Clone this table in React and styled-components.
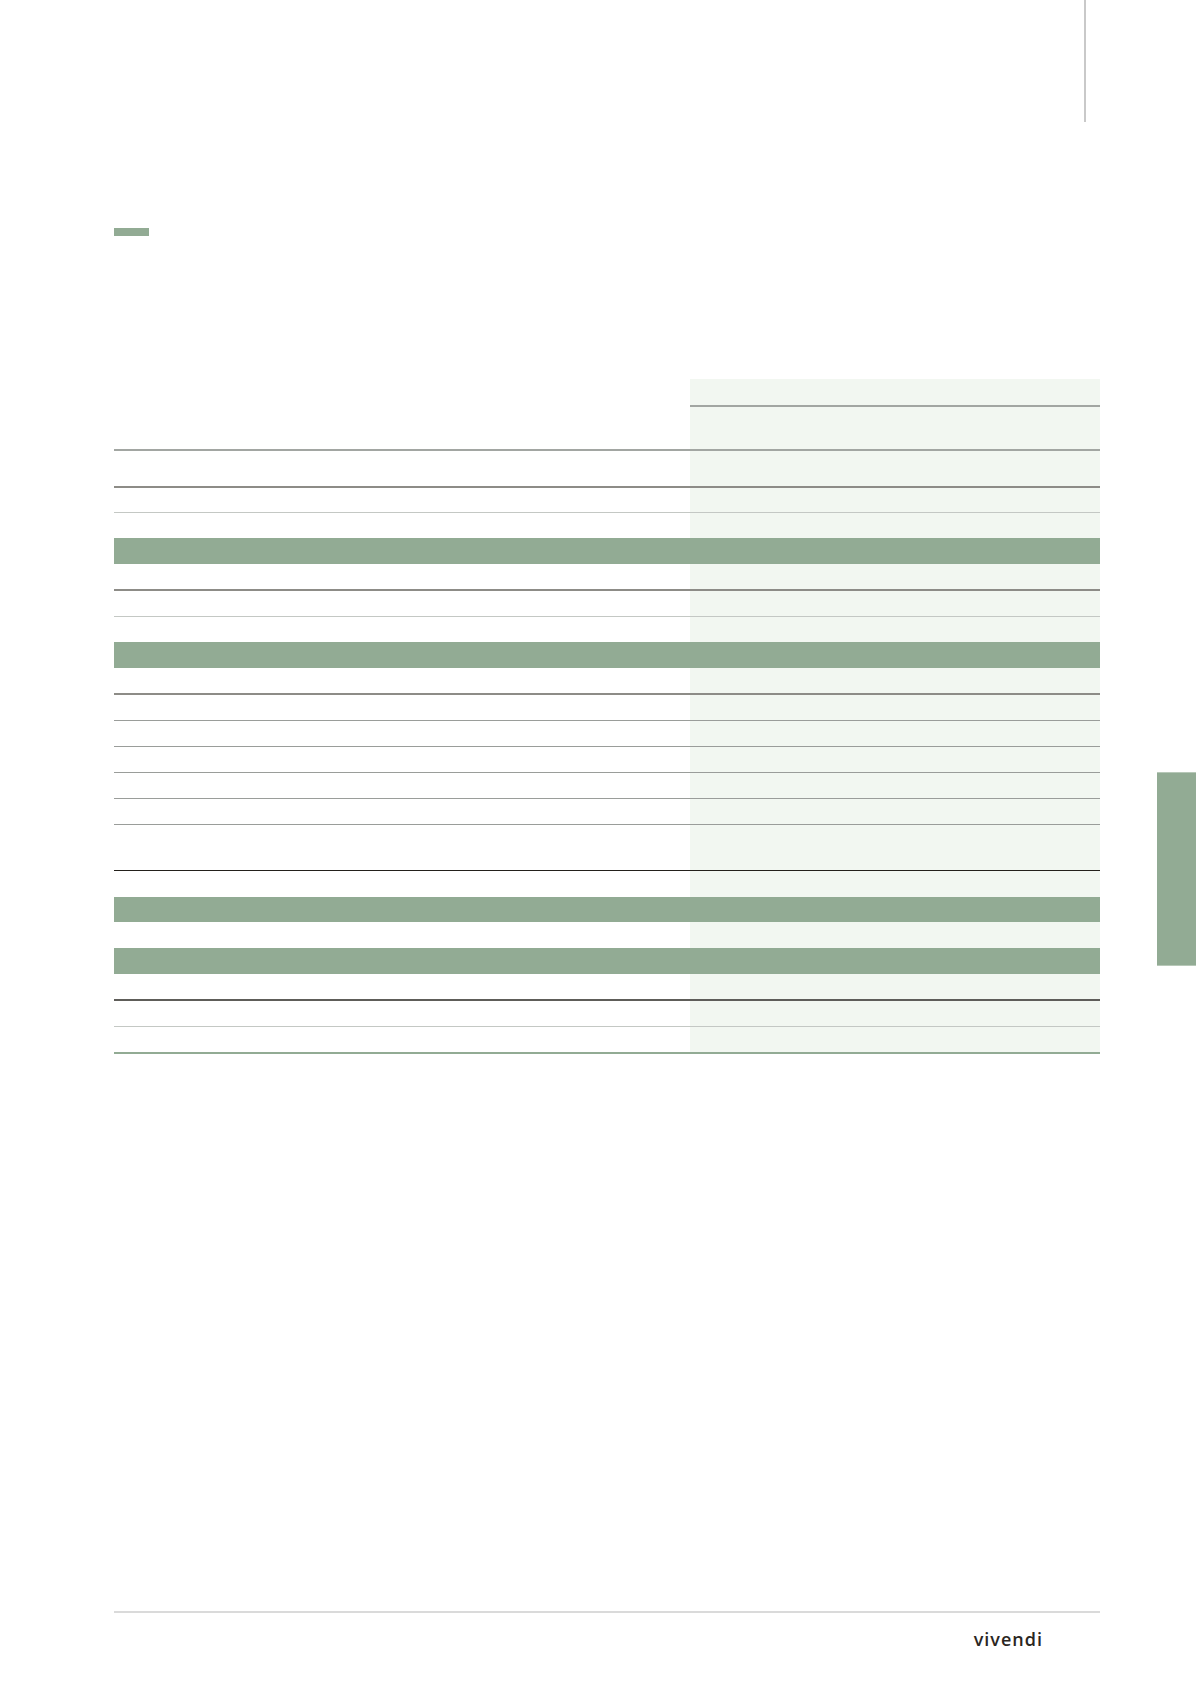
import styled, { createGlobalStyle } from "styled-components";

const GlobalStyle = createGlobalStyle`
  html, body {
    margin: 0;
    padding: 0;
    background: #ffffff;
  }
  * { box-sizing: border-box; }
`;

const sage = "#92ab94";
const shade = "#f2f7f1";

const lines = {
  head: "2px solid #a2a6a2",
  dark: "2px solid #8d8c87",
  light: "1px solid #c4c8c4",
  mid: "1px solid #9a9d9a",
  black: "1px solid #23201b",
  deep: "2px solid #5e5d59",
  green: `2px solid ${sage}`,
};

// table rows, top to bottom (height includes the bottom rule)
const rows = [
  { h: 28, line: "head", headOnly: true },
  { h: 44, line: "head" },
  { h: 37, line: "dark" },
  { h: 25, line: "light" },
  { h: 25 },
  { h: 26, band: true },
  { h: 27, line: "dark" },
  { h: 26, line: "light" },
  { h: 25 },
  { h: 26, band: true },
  { h: 27, line: "dark" },
  { h: 26, line: "mid" },
  { h: 26, line: "mid" },
  { h: 26, line: "mid" },
  { h: 26, line: "mid" },
  { h: 26, line: "mid" },
  { h: 46, line: "black" },
  { h: 26 },
  { h: 25, band: true },
  { h: 26 },
  { h: 26, band: true },
  { h: 27, line: "deep" },
  { h: 26, line: "light" },
  { h: 27, line: "green" },
];

export default function App() {
  return (
    <>
      <GlobalStyle />
      <Page>
        <TopBar>
          <VRule />
        </TopBar>
        <Mark />
        <Table>
          {rows.map((r, i) => (
            <Row key={i} $h={r.h} $band={r.band} $line={r.headOnly ? null : r.line}>
              <LabelCell />
              {[0, 1, 2, 3].map((c) => (
                <ValueCell key={c} $band={r.band} $line={r.headOnly ? r.line : null} />
              ))}
            </Row>
          ))}
        </Table>
        <Footer>
          <FooterRule />
          <LogoRow>
            <Logo>vivendi</Logo>
          </LogoRow>
        </Footer>
        <SideTab />
      </Page>
    </>
  );
}

const Page = styled.div`
  position: relative;
  width: 1196px;
  height: 1692px;
  display: flex;
  flex-direction: column;
  padding: 0 96px 0 114px;
  overflow: hidden;
`;

const TopBar = styled.div`
  height: 122px;
  display: flex;
  justify-content: flex-end;
`;

const VRule = styled.div`
  width: 2px;
  height: 100%;
  margin-right: 14px;
  background: #c9c9c9;
`;

const Mark = styled.div`
  margin-top: 106px;
  width: 35px;
  height: 8px;
  background: ${sage};
`;

const Table = styled.div`
  margin-top: 143px;
  display: flex;
  flex-direction: column;
`;

const Row = styled.div`
  display: grid;
  grid-template-columns: 576px 97px 96px 120px 97px;
  height: ${(p) => p.$h}px;
  background: ${(p) => (p.$band ? sage : "transparent")};
  border-bottom: ${(p) => (p.$line ? lines[p.$line] : "none")};
`;

const LabelCell = styled.div``;

const ValueCell = styled.div`
  background: ${(p) => (p.$band ? "transparent" : shade)};
  border-bottom: ${(p) => (p.$line ? lines[p.$line] : "none")};
`;

const Footer = styled.div`
  margin-top: auto;
  height: 81px;
  display: flex;
  flex-direction: column;
`;

const FooterRule = styled.div`
  height: 2px;
  background: #dadada;
`;

const LogoRow = styled.div`
  display: flex;
  justify-content: flex-end;
  padding: 17px 57px 0 0;
`;

const Logo = styled.span`
  font-family: "Open Sans", "DejaVu Sans", sans-serif;
  font-weight: 600;
  font-size: 18px;
  line-height: 1;
  letter-spacing: 1px;
  color: #2b2622;
`;

const SideTab = styled.div`
  position: absolute;
  right: 0;
  top: 772px;
  width: 39px;
  height: 194px;
  background: ${sage};
  border-top: 1px solid #b7c8b8;
  border-bottom: 1px solid #b7c8b8;
`;
